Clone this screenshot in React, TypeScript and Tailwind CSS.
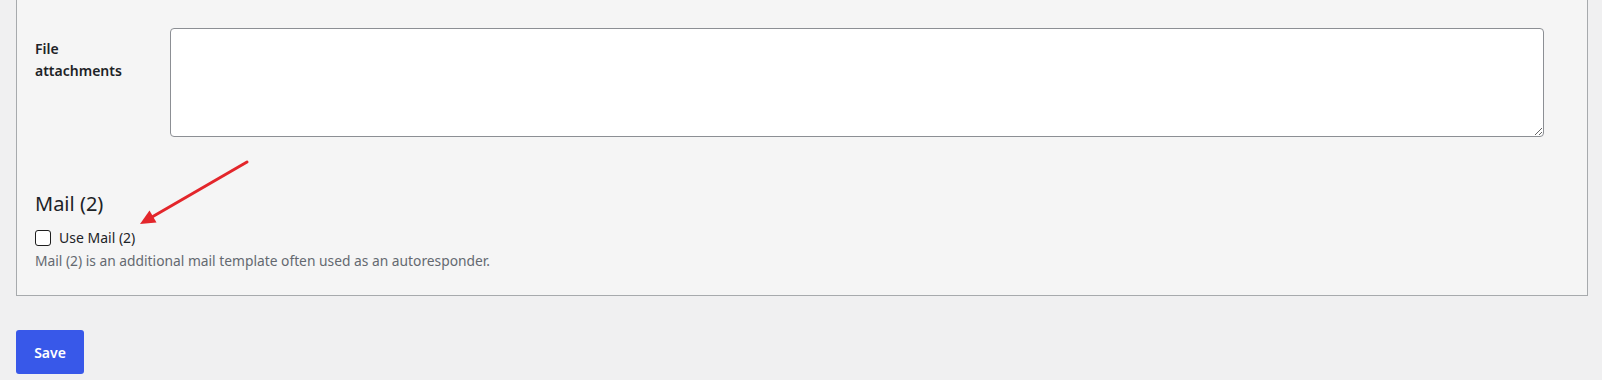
import React from 'react';

const font = { fontFamily: '"Noto Sans", "Open Sans", sans-serif' };

export default function App() {
  return (
    <div className="relative min-h-[381px] w-full bg-[#f0f0f1] text-[#1d2327]" style={font}>
      <div className="-mt-px ml-4 mr-[14px] border border-[#a7aaad] bg-[#f5f5f5] pt-[28px] pb-[24px]">
        {/* File attachments row */}
        <div className="flex pr-[43px]">
          <div className="w-[153px] shrink-0 pl-[18px] pt-[10px] text-[14px] font-semibold leading-[22px]">
            File
            <br />
            attachments
          </div>
          <textarea className="h-[109px] flex-1 rounded-[4px] border border-[#8c8f94] bg-white outline-none" />
        </div>

        {/* Mail (2) */}
        <div className="mt-[53px] pl-[18px]">
          <h2 className="text-[20px] leading-[28px] text-[#1d2327]">Mail (2)</h2>
          <label className="mt-[10px] flex items-center gap-[8px] text-[14px] leading-[20px]">
            <span className="block h-[16px] w-[16px] rounded-[3px] border border-[#1e1e1e] bg-white" />
            Use Mail (2)
          </label>
          <p className="mt-[3px] text-[13.8px] leading-[20px] text-[#646970]">
            Mail (2) is an additional mail template often used as an autoresponder.
          </p>
        </div>
      </div>

      <div className="px-4 pt-[34px]">
        <button className="h-[44px] w-[68px] rounded-[3px] bg-[#3858e9] text-[14px] font-semibold text-white">
          Save
        </button>
      </div>

      {/* annotation arrow */}
      <svg className="pointer-events-none absolute left-0 top-0" width="1602" height="381">
        <line x1="247" y1="163" x2="152" y2="218" stroke="#e3262b" strokeWidth="3" strokeLinecap="round" />
        <polygon points="140,225 149.5,211.4 156.5,223.6" fill="#e3262b" />
      </svg>
    </div>
  );
}
